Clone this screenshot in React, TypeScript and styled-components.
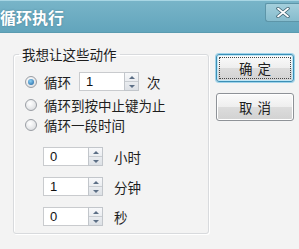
import React from "react";
import styled, { createGlobalStyle } from "styled-components";

const Global = createGlobalStyle`
  html, body { margin: 0; padding: 0; background: #f3f3f3; }
  body { font-family: "Noto Sans CJK SC", "Noto Sans", sans-serif; color: #1e1e1e; }
`;

const Window = styled.div`
  width: 299px;
  height: 249px;
  background: #f3f3f3;
  display: flex;
  flex-direction: column;
  overflow: hidden;
`;

const TitleBar = styled.div`
  height: 33px;
  box-sizing: border-box;
  border-top: 1px solid #a8d6e4;
  border-bottom: 1px solid #5a9bb0;
  background: linear-gradient(#78b4c8, #62a5bc);
  display: flex;
  justify-content: space-between;
  align-items: flex-start;
`;

const Title = styled.div`
  margin-left: 0;
  margin-top: 5px;
  color: #fff;
  font-size: 16px;
  font-weight: 700;
  line-height: 22px;
  text-shadow: 0 0 2px rgba(40, 80, 100, 0.5);
`;

const CloseButton = styled.div`
  margin-top: 2px;
  width: 34px;
  height: 19px;
  box-sizing: border-box;
  border: 1px solid #5d95a8;
  border-right: none;
  border-radius: 2px 0 0 3px;
  background: linear-gradient(#a4cfdc, #86bccd);
  display: flex;
  align-items: center;
  justify-content: center;
`;

const Body = styled.div`
  display: flex;
  align-items: flex-start;
`;

const Group = styled.fieldset`
  margin: 11px 0 0 13px;
  padding: 0;
  width: 196px;
  height: 190px;
  box-sizing: border-box;
  border: 1px solid #d8dadd;
  border-radius: 3px;
  box-shadow: inset 1px 1px 0 #fff, 1px 1px 0 #fff;
  display: flex;
  flex-direction: column;
`;

const Legend = styled.legend`
  margin-left: 5px;
  padding: 0 3px;
  font-size: 13.5px;
  line-height: 20px;
  color: #1e1e1e;
`;

const RadioRow = styled.div<{ $top: number; $h: number }>`
  margin-top: ${(p) => p.$top}px;
  height: ${(p) => p.$h}px;
  display: flex;
  align-items: center;
  padding-left: 11px;
  font-size: 13.5px;
`;

const Radio = styled.span<{ $checked?: boolean }>`
  width: 12px;
  height: 12px;
  box-sizing: border-box;
  border-radius: 50%;
  border: 1px solid #9a9ea4;
  background: radial-gradient(circle at 40% 35%, #ffffff, #d4d6d9);
  display: flex;
  align-items: center;
  justify-content: center;
  margin-right: 7px;
  &::after {
    content: "";
    display: ${(p) => (p.$checked ? "block" : "none")};
    width: 6px;
    height: 6px;
    border-radius: 50%;
    background: radial-gradient(circle at 40% 35%, #8ad0f5, #1c5f9c);
  }
`;

const Spin = styled.div<{ $ml: number }>`
  margin-left: ${(p) => p.$ml}px;
  display: flex;
  height: 19px;
`;

const SpinInput = styled.div`
  width: 45px;
  box-sizing: border-box;
  border: 1px solid #c9cbce;
  border-right: none;
  background: #fff;
  font-family: "Liberation Sans", Arial, sans-serif;
  font-size: 13px;
  line-height: 17px;
  padding-left: 6px;
  color: #111;
`;

const SpinButtons = styled.div`
  width: 15px;
  box-sizing: border-box;
  border: 1px solid #c2c6cb;
  background: linear-gradient(#f7f8fa, #dde1e6);
  display: flex;
  flex-direction: column;
`;

const SpinHalf = styled.div<{ $down?: boolean }>`
  flex: 1;
  display: flex;
  align-items: center;
  justify-content: center;
  border-top: ${(p) => (p.$down ? "1px solid #c9cdd2" : "none")};
  &::after {
    content: "";
    width: 0;
    height: 0;
    border-left: 3px solid transparent;
    border-right: 3px solid transparent;
    ${(p) =>
      p.$down
        ? "border-top: 3px solid #5c6f86;"
        : "border-bottom: 3px solid #5c6f86;"}
  }
`;

const Unit = styled.span<{ $ml: number }>`
  margin-left: ${(p) => p.$ml}px;
  font-size: 13.5px;
`;

const TimeRow = styled.div<{ $top: number }>`
  margin-top: ${(p) => p.$top}px;
  padding-left: 29px;
  display: flex;
  align-items: center;
  height: 19px;
`;

const Buttons = styled.div`
  margin: 21px 0 0 7px;
  display: flex;
  flex-direction: column;
  gap: 11px;
`;

const Button = styled.div<{ $default?: boolean }>`
  width: 78px;
  height: 28px;
  box-sizing: border-box;
  border-radius: 3px;
  border: 1px solid ${(p) => (p.$default ? "#3c8fb5" : "#8e9297")};
  box-shadow: ${(p) =>
    p.$default ? "0 0 0 1px #9fd3ea, inset 0 0 0 1px #bfe6f6" : "inset 0 0 0 1px #fff"};
  background: linear-gradient(#fbfbfb 0%, #eeeeee 50%, #dcdcdc 51%, #d2d2d2 100%);
  display: flex;
  align-items: center;
  justify-content: center;
  font-size: 13.5px;
  letter-spacing: 5px;
  padding-left: 5px;
  position: relative;
`;

const Focus = styled.span`
  position: absolute;
  inset: 2px;
  border: 1px dotted #444;
  border-radius: 1px;
`;

const SpinBox: React.FC<{ value: string; ml: number }> = ({ value, ml }) => (
  <Spin $ml={ml}>
    <SpinInput>{value}</SpinInput>
    <SpinButtons>
      <SpinHalf />
      <SpinHalf $down />
    </SpinButtons>
  </Spin>
);

export default function App() {
  return (
    <Window>
      <Global />
      <TitleBar>
        <Title>循环执行</Title>
        <CloseButton>
          <svg width="14" height="11" viewBox="0 0 14 11">
            <path
              d="M2 1.5 L12 9.5 M12 1.5 L2 9.5"
              stroke="#3c5f6e"
              strokeWidth="3.4"
              strokeLinecap="round"
            />
            <path
              d="M2 1.5 L12 9.5 M12 1.5 L2 9.5"
              stroke="#ffffff"
              strokeWidth="1.8"
              strokeLinecap="round"
            />
          </svg>
        </CloseButton>
      </TitleBar>
      <Body>
        <Group>
          <Legend>我想让这些动作</Legend>
          <RadioRow $top={8} $h={19}>
            <Radio $checked />
            循环
            <SpinBox value="1" ml={8} />
            <Unit $ml={8}>次</Unit>
          </RadioRow>
          <RadioRow $top={4} $h={19}>
            <Radio />
            循环到按中止键为止
          </RadioRow>
          <RadioRow $top={1} $h={19}>
            <Radio />
            循环一段时间
          </RadioRow>
          <TimeRow $top={13}>
            <SpinBox value="0" ml={0} />
            <Unit $ml={11}>小时</Unit>
          </TimeRow>
          <TimeRow $top={11}>
            <SpinBox value="1" ml={0} />
            <Unit $ml={11}>分钟</Unit>
          </TimeRow>
          <TimeRow $top={11}>
            <SpinBox value="0" ml={0} />
            <Unit $ml={11}>秒</Unit>
          </TimeRow>
        </Group>
        <Buttons>
          <Button $default>
            <Focus />
            确定
          </Button>
          <Button>取消</Button>
        </Buttons>
      </Body>
    </Window>
  );
}
